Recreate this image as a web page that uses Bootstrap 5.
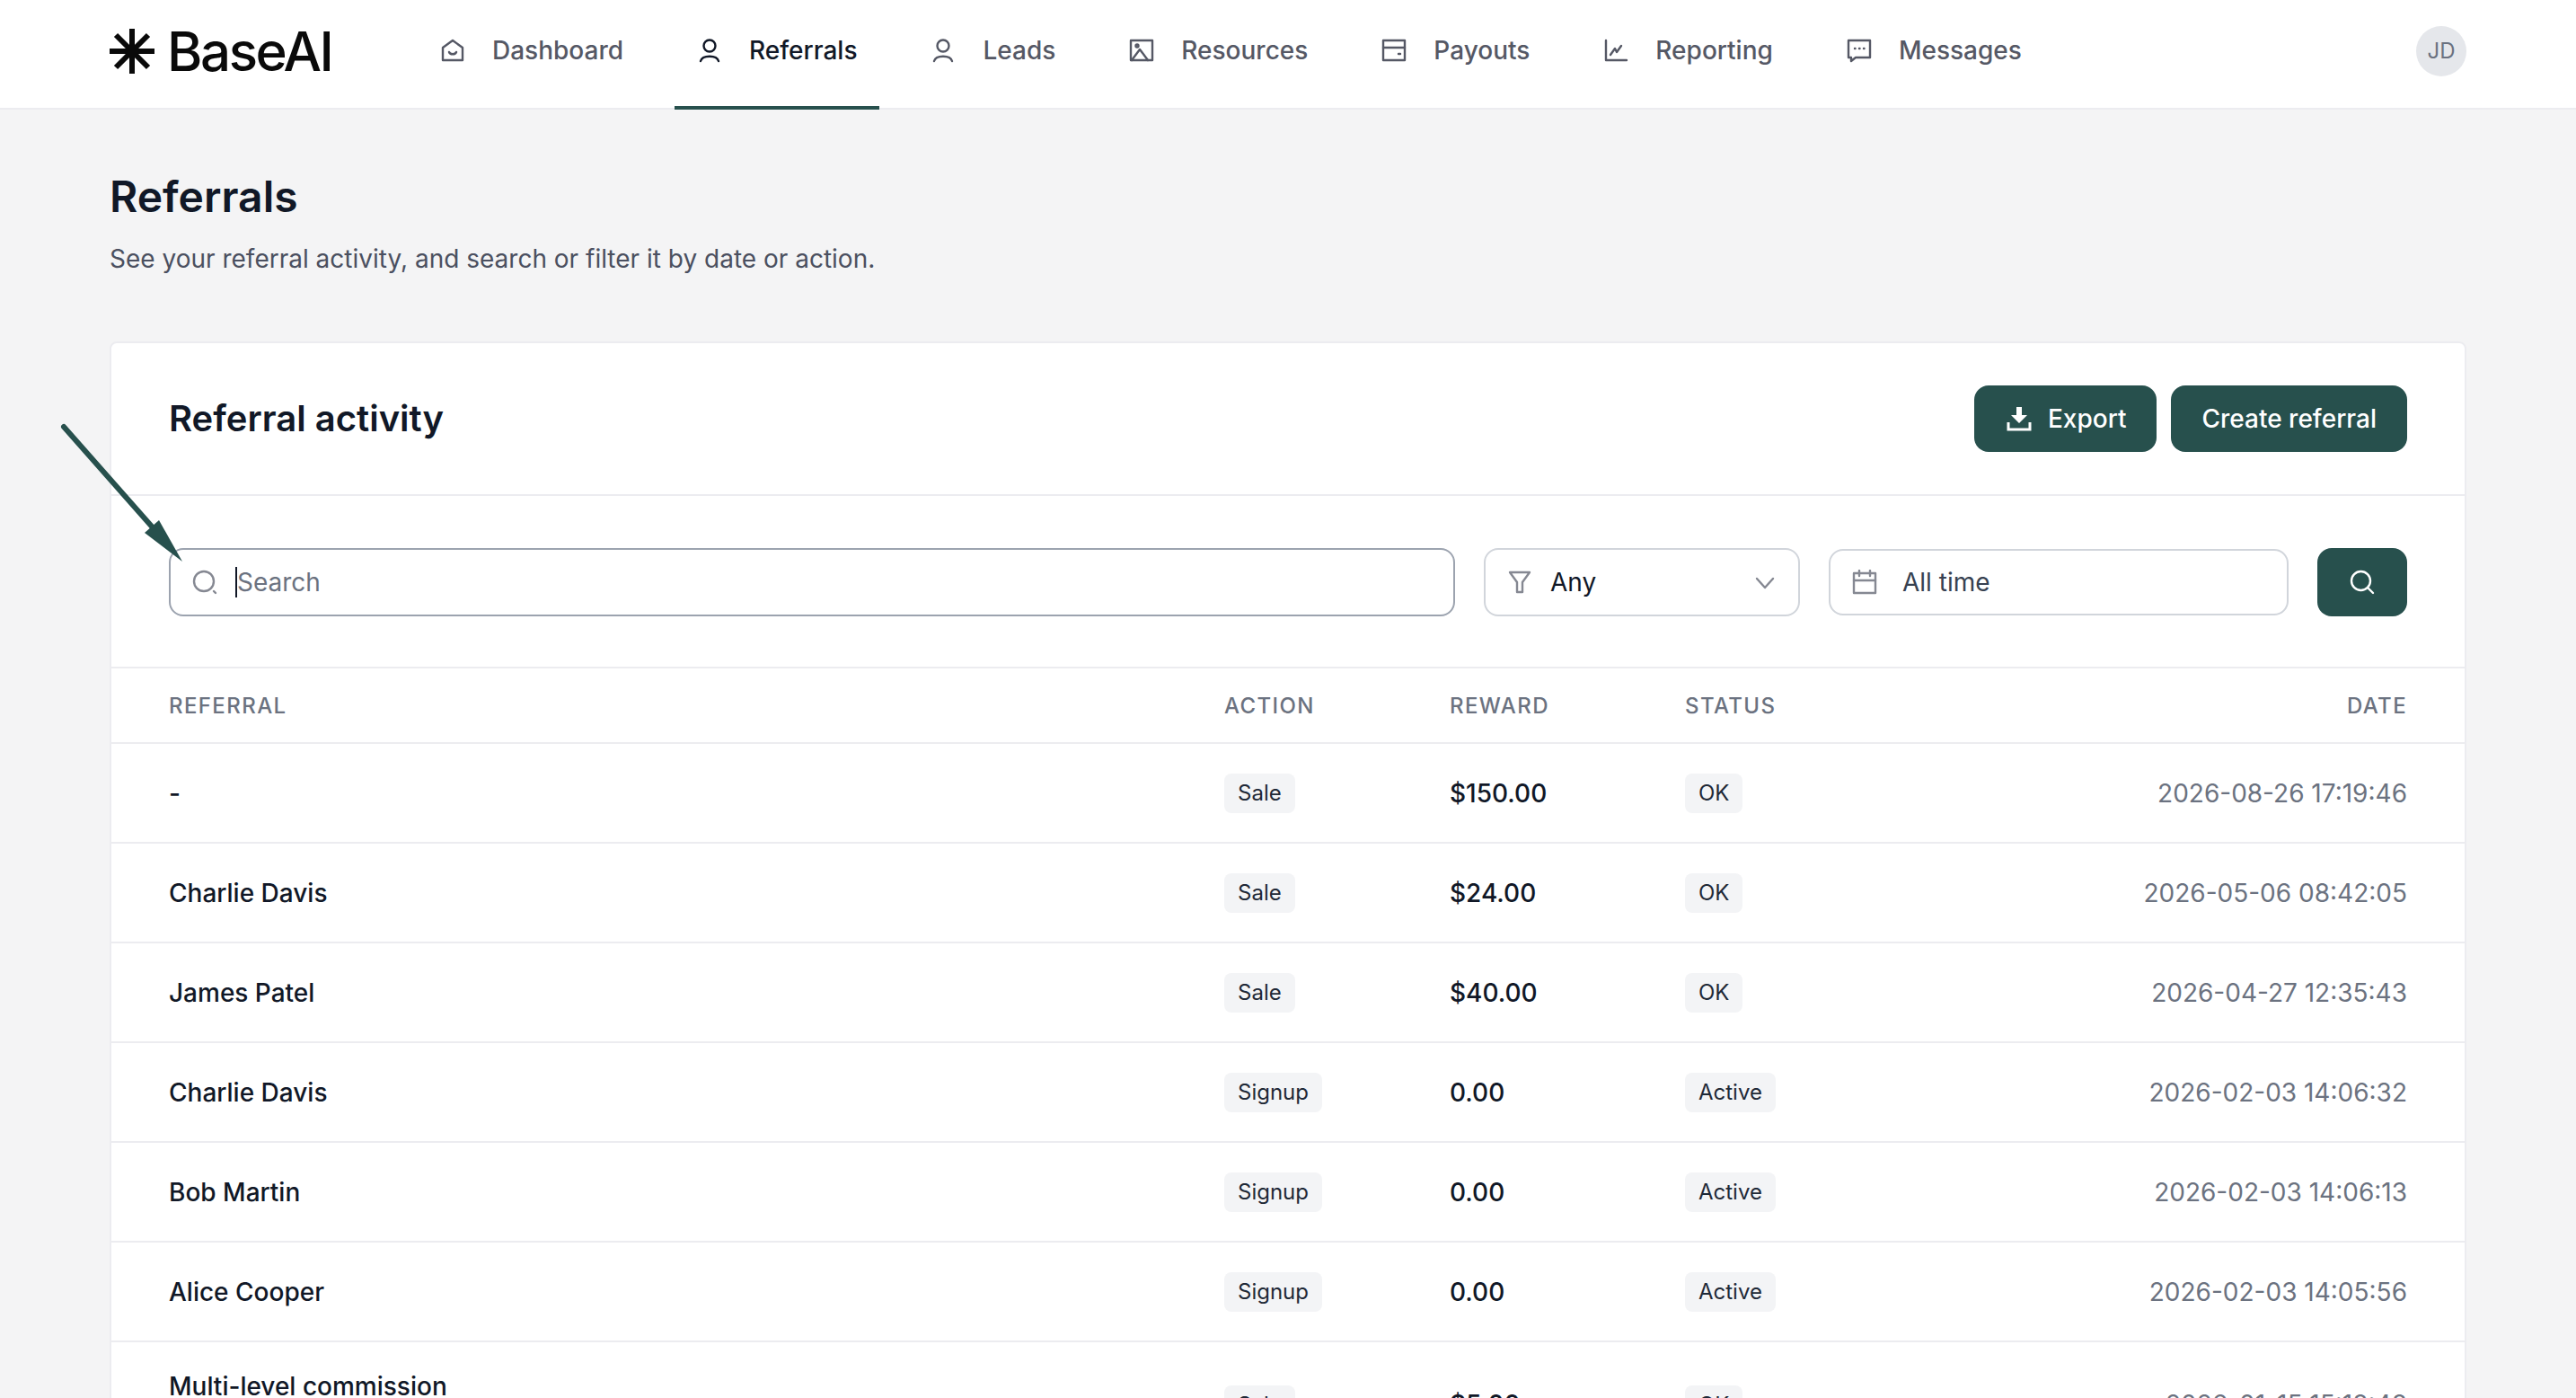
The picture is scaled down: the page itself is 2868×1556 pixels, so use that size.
<!DOCTYPE html>
<html>
  <head>
    <title>Referrals</title>
    <link href="https://cdn.jsdelivr.net/npm/bootstrap@5.3.3/dist/css/bootstrap.min.css" rel="stylesheet" />
    <script src="https://cdn.jsdelivr.net/npm/bootstrap@5.3.3/dist/js/bootstrap.bundle.min.js"></script>
    <style>
      html, body { height: 100%; overflow: hidden; }
      body { background: #f4f4f5; font-family: Inter, "Liberation Sans", sans-serif; color: #111827; font-size: 28px; }
      .ic { fill: none; stroke: currentColor; stroke-width: 2.4; stroke-linecap: round; stroke-linejoin: round; flex-shrink: 0; }
      .top-bar { height: 122px; background: #fff; border-bottom: 2px solid #ececf0; padding: 0 122px; }
      .brand-mark { color: #0a0a0a; gap: 14px; margin-right: 95px; width: 248px; height: 114px; margin-bottom: 6px; text-decoration: none; }
      .brand-text { font-size: 60px; font-weight: 500; letter-spacing: -2.4px; line-height: 1; }
      .top-link { height: 122px; padding: 0 25px; gap: 30px; color: #555865; font-size: 28px; font-weight: 500; text-decoration: none; margin-right: 32px; margin-bottom: -2px; padding-bottom: 6px; border-bottom: 4px solid transparent; }
      .top-link.is-on { color: #111827; border-bottom-color: #27504d; }
      .initials { width: 56px; height: 56px; border-radius: 50%; background: #e5e7eb; color: #6b7280; font-size: 24px; margin-bottom: 6px; }
      .page-wrap { padding: 68px 122px 0; }
      .page-title { font-size: 48px; font-weight: 600; color: #111827; line-height: 58px; margin: 0 0 22px; }
      .page-sub { font-size: 28px; color: #4b5060; line-height: 36px; margin: 0 0 74px; }
      .panel { background: #fff; border: 2px solid #ececf0; border-radius: 8px; margin-bottom: 0; }
      .panel-head { padding: 46px 64px; height: 170px; border-bottom: 2px solid #ececf0; }
      .panel-title { font-size: 40px; font-weight: 600; margin: 0; color: #111827; }
      .dark-btn { background: #27504d; color: #fff; border: 0; border-radius: 16px; height: 74px; font-size: 28px; font-weight: 500; padding: 0 34px; gap: 16px; }
      .dark-btn:hover { background: #27504d; color: #fff; }
      .filter-row { padding: 58px 64px 56px; gap: 32px; border-bottom: 2px solid #ececf0; }
      .field-box { height: 76px; border: 2px solid #d1d5db; border-radius: 16px; padding: 0 24px; background: #fff; }
      .field-search { width: 1432px; border-color: #9ca3af; gap: 20px; }
      .field-any { width: 352px; gap: 20px; padding-right: 25px; }
      .field-date { width: 512px; gap: 28px; height: 74px; color: #374151; }
      .search-go { width: 100px; height: 76px; padding: 0; margin-left: 0; }
      .caret-mark { width: 2px; height: 34px; background: #111827; }
      .ph-text { color: #6b7280; margin-left: -20px; }
      .ic-grey { color: #858892; }
      .data-head, .data-row { display: grid; grid-template-columns: 1175px 251px 262px 1fr 300px; padding: 0 64px; align-items: center; border-bottom: 2px solid #ececf0; }
      .data-head { height: 84px; font-size: 24px; color: #6b7280; letter-spacing: 1.4px; font-weight: 500; padding-top: 1px; }
      .data-row { height: 111px; font-size: 28px; font-weight: 450; color: #111827; }
      .data-row.row-tall { height: 140px; }
      .row-tall .name-top { margin-bottom: 40px; }
      .row-date { text-align: right; color: #6b7280; font-weight: 400; white-space: nowrap; }
      .amount { font-weight: 500; }
      .chip { display: inline-block; background: #f3f4f6; border-radius: 8px; font-size: 24px; line-height: 44px; height: 44px; padding: 0 15px; color: #1f2937; font-weight: 400; }
      .pointer-arrow { position: absolute; left: 60px; top: 464px; pointer-events: none; }
    </style>
  </head>
  <body>
    <header class="top-bar d-flex align-items-center">
      <a class="brand-mark d-flex align-items-center" href="#">
        <svg width="50" height="50" viewBox="0 0 50 50" fill="none" stroke="#0a0a0a" stroke-width="6"><path d="M25 0v50M0 25h50M7 7l36 36M43 7L7 43"/></svg>
        <span class="brand-text">BaseAI</span>
      </a>
      <nav class="d-flex align-items-center flex-grow-1">
        <a class="top-link d-flex align-items-center" href="#">
          <svg class="ic" width="28" height="28" viewBox="0 0 28 28"><path d="M3 11l11-8 11 8v14H3z"/><path d="M10 16c1 3 7 3 8 0"/></svg>Dashboard</a>
        <a class="top-link d-flex align-items-center is-on" href="#">
          <svg class="ic" width="28" height="28" viewBox="0 0 28 28"><circle cx="14" cy="9" r="6.500"/><path d="M4 26c2-7 18-7 20 0"/></svg>Referrals</a>
        <a class="top-link d-flex align-items-center" href="#">
          <svg class="ic" width="28" height="28" viewBox="0 0 28 28"><circle cx="14" cy="9" r="6.500"/><path d="M4 26c2-7 18-7 20 0"/></svg>Leads</a>
        <a class="top-link d-flex align-items-center" href="#">
          <svg class="ic" width="28" height="28" viewBox="0 0 28 28"><rect x="2" y="3" width="24" height="22"/><path d="M3 25l9-12 9 12"/><circle cx="9" cy="9" r="1.500"/></svg>Resources</a>
        <a class="top-link d-flex align-items-center" href="#">
          <svg class="ic" width="28" height="28" viewBox="0 0 28 28"><rect x="2" y="3" width="24" height="22"/><path d="M2 11h24M19 18h2"/></svg>Payouts</a>
        <a class="top-link d-flex align-items-center" href="#">
          <svg class="ic" width="28" height="28" viewBox="0 0 28 28"><path d="M3 3v22h23M8 19l5-7 2 4 5-7"/></svg>Reporting</a>
        <a class="top-link d-flex align-items-center" href="#">
          <svg class="ic" width="28" height="28" viewBox="0 0 28 28"><path d="M2 3h24v19H10l-5 4v-4H2z"/><path d="M9 12h.5M14 12h.5M19 12h.5"/></svg>Messages</a>
      </nav>
      <div class="initials d-flex align-items-center justify-content-center">JD</div>
    </header>

    <main class="page-wrap">
      <h1 class="page-title">Referrals</h1>
      <p class="page-sub">See your referral activity, and search or filter it by date or action.</p>

      <section class="panel">
        <div class="panel-head d-flex align-items-center justify-content-between">
          <h2 class="panel-title">Referral activity</h2>
          <div class="d-flex gap-3">
            <button type="button" class="btn dark-btn d-flex align-items-center">
              <svg width="32" height="30" viewBox="0 0 32 30"><path d="M13 2h6v9h6l-9 9-9-9h6z" fill="#fff"/><path d="M4 19v8h24v-8" fill="none" stroke="#fff" stroke-width="3"/></svg>Export</button>
            <button type="button" class="btn dark-btn d-flex align-items-center">Create referral</button>
          </div>
        </div>

        <div class="filter-row d-flex align-items-center">
          <div class="field-box field-search d-flex align-items-center">
            <svg class="ic ic-grey" width="28" height="28" viewBox="0 0 28 28"><circle cx="13" cy="13" r="11"/><path d="M24 24l2 2"/></svg>
            <span class="caret-mark"></span><span class="ph-text">Search</span>
          </div>
          <div class="field-box field-any d-flex align-items-center">
            <svg class="ic ic-grey" width="28" height="28" viewBox="0 0 28 28"><path d="M3 3h22l-8 11v11h-6V14z"/></svg>
            <span class="flex-grow-1">Any</span>
            <svg class="ic ic-grey" width="24" height="24" viewBox="0 0 24 24"><path d="M3 8l9 10 9-10"/></svg>
          </div>
          <div class="field-box field-date d-flex align-items-center">
            <svg class="ic ic-grey" width="28" height="28" viewBox="0 0 28 28"><rect x="2" y="4" width="24" height="22"/><path d="M2 12h24M8 1v6M20 1v6"/></svg>
            <span>All time</span>
          </div>
          <button type="button" class="btn dark-btn search-go d-flex align-items-center justify-content-center">
            <svg class="ic" width="30" height="30" viewBox="0 0 30 30"><circle cx="13.500" cy="13.500" r="10.500"/><path d="M22 22l5 5"/></svg>
          </button>
        </div>

        <div class="data-head"><span>REFERRAL</span><span>ACTION</span><span>REWARD</span><span>STATUS</span><span class="text-end">DATE</span></div>
        <div class="data-row"><span>-</span><span><span class="chip">Sale</span></span><span class="amount">$150.00</span><span><span class="chip">OK</span></span><span class="row-date">2026-08-26 17:19:46</span></div>
        <div class="data-row"><span>Charlie Davis</span><span><span class="chip">Sale</span></span><span class="amount">$24.00</span><span><span class="chip">OK</span></span><span class="row-date">2026-05-06 08:42:05</span></div>
        <div class="data-row"><span>James Patel</span><span><span class="chip">Sale</span></span><span class="amount">$40.00</span><span><span class="chip">OK</span></span><span class="row-date">2026-04-27 12:35:43</span></div>
        <div class="data-row"><span>Charlie Davis</span><span><span class="chip">Signup</span></span><span class="amount">0.00</span><span><span class="chip">Active</span></span><span class="row-date">2026-02-03 14:06:32</span></div>
        <div class="data-row"><span>Bob Martin</span><span><span class="chip">Signup</span></span><span class="amount">0.00</span><span><span class="chip">Active</span></span><span class="row-date">2026-02-03 14:06:13</span></div>
        <div class="data-row"><span>Alice Cooper</span><span><span class="chip">Signup</span></span><span class="amount">0.00</span><span><span class="chip">Active</span></span><span class="row-date">2026-02-03 14:05:56</span></div>
        <div class="data-row row-tall"><span class="name-top">Multi-level commission</span><span><span class="chip">Sale</span></span><span class="amount">$5.00</span><span><span class="chip">OK</span></span><span class="row-date">2026-01-15 15:18:48</span></div>
      </section>
    </main>

    <svg class="pointer-arrow" width="150" height="170" viewBox="0 0 150 170">
      <path d="M11 11L109 122" stroke="#27504d" stroke-width="6" stroke-linecap="round" fill="none"/>
      <path d="M143 161L117 115 101 129z" fill="#27504d"/>
    </svg>
  </body>
</html>
